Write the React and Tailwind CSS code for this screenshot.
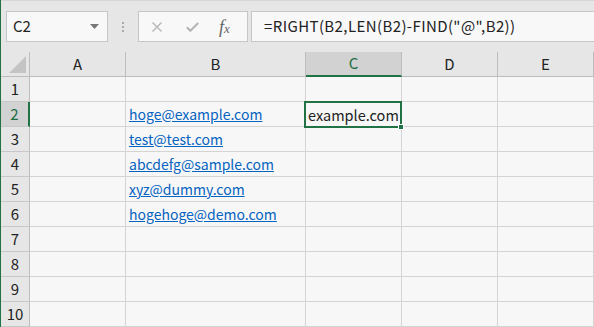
import React from "react";

const font = { fontFamily: '"Noto Sans CJK JP", "Noto Sans", sans-serif' };

const cols = ["A", "B", "C", "D", "E"];
const widths = ["w-[96px]", "w-[180px]", "w-[96px]", "w-[96px]", "w-[96px]"];
const emails = {
  2: "hoge@example.com",
  3: "test@test.com",
  4: "abcdefg@sample.com",
  5: "xyz@dummy.com",
  6: "hogehoge@demo.com",
};

export default function App() {
  const rows = [1, 2, 3, 4, 5, 6, 7, 8, 9, 10];
  return (
    <div className="w-[594px] h-[327px] overflow-hidden bg-[#e6e6e6] border-l border-[#217346] flex flex-col" style={font}>
      {/* toolbar */}
      <div className="h-[52px] shrink-0 border-t border-[#d6d6d6] flex items-start pt-[10px] pl-[5px]">
        <div className="w-[102px] h-[31px] bg-[#f8f8f8] border border-[#c6c6c6] flex items-center justify-between pl-[6px] pr-[8px]">
          <span className="text-[15px] text-[#222]">C2</span>
          <svg width="9" height="5" viewBox="0 0 9 5"><path d="M0 0h9L4.5 5z" fill="#777" /></svg>
        </div>
        <div className="w-[30px] h-[31px] flex flex-col items-center justify-center gap-[2px]">
          <div className="w-[2px] h-[2px] bg-[#aaa]" />
          <div className="w-[2px] h-[2px] bg-[#aaa]" />
          <div className="w-[2px] h-[2px] bg-[#aaa]" />
        </div>
        <div className="w-[110px] h-[31px] bg-[#f8f8f8] border border-[#c6c6c6] flex items-center pl-[13px]">
          <svg width="10" height="10" viewBox="0 0 10 10"><path d="M0.5 0.5l9 9M9.5 0.5l-9 9" stroke="#b4b4b4" strokeWidth="1.3" /></svg>
          <svg className="ml-[24px]" width="13" height="10" viewBox="0 0 13 10"><path d="M0.8 5.2l3.6 3.6L12.2 1" stroke="#b4b4b4" strokeWidth="2" fill="none" /></svg>
          <span className="ml-[20px] text-[18px] italic text-[#666] leading-none" style={{ fontFamily: '"Liberation Serif", serif' }}>
            f<span className="text-[13px]">x</span>
          </span>
        </div>
        <div className="flex-1 h-[31px] ml-[3px] bg-[#f8f8f8] border-t border-b border-l border-[#c6c6c6] flex items-center pl-[12px]">
          <span className="text-[15px] tracking-[0.4px] text-[#222] whitespace-nowrap">=RIGHT(B2,LEN(B2)-FIND("@",B2))</span>
        </div>
      </div>

      {/* header row */}
      <div className="flex h-[25px] shrink-0">
        <div className="w-[29px] h-[25px] bg-[#e6e6e6] border-r border-b border-[#bdbdbd] flex items-end justify-end pr-[3px] pb-[3px]">
          <svg width="17" height="17" viewBox="0 0 17 17"><path d="M17 0V17H0z" fill="#c4c4c4" /></svg>
        </div>
        {cols.map((c, i) => (
          <div
            key={c}
            className={`${widths[i]} h-[25px] flex items-center justify-center text-[15px] border-r ${
              c === "C"
                ? "bg-[#d2d2d2] text-[#1e6e43] border-b-2 border-b-[#217346] border-r-[#bdbdbd]"
                : "bg-[#e6e6e6] text-[#222] border-b border-[#bdbdbd]"
            }`}
          >
            {c}
          </div>
        ))}
      </div>

      {rows.map((r) => (
        <div key={r} className="flex h-[25px] shrink-0">
          <div
            className={`w-[29px] h-[25px] flex items-center justify-center text-[15px] border-b border-b-[#c8c8c8] ${
              r === 2
                ? "bg-[#d2d2d2] text-[#1e6e43] border-r-2 border-r-[#217346]"
                : "bg-[#e6e6e6] text-[#222] border-r border-r-[#bdbdbd]"
            }`}
          >
            {r}
          </div>
          {cols.map((c, i) => (
            <div
              key={c}
              className={`${widths[i]} h-[25px] bg-[#f7f7f7] border-r border-b border-[#d4d4d4] relative flex items-center`}
            >
              {c === "B" && emails[r] && (
                <span className="pl-[3px] text-[14px] text-[#0563c1] underline whitespace-nowrap">{emails[r]}</span>
              )}
              {c === "C" && r === 2 && (
                <div className="absolute left-[-2px] top-[-1px] w-[98px] h-[27px] border-2 border-[#217346] flex items-center pl-[2px] z-10">
                  <span className="text-[14.5px] text-[#222] whitespace-nowrap">example.com</span>
                  <div className="absolute right-[-4px] bottom-[-4px] w-[6px] h-[6px] bg-[#217346] border border-white" />
                </div>
              )}
            </div>
          ))}
        </div>
      ))}
    </div>
  );
}
